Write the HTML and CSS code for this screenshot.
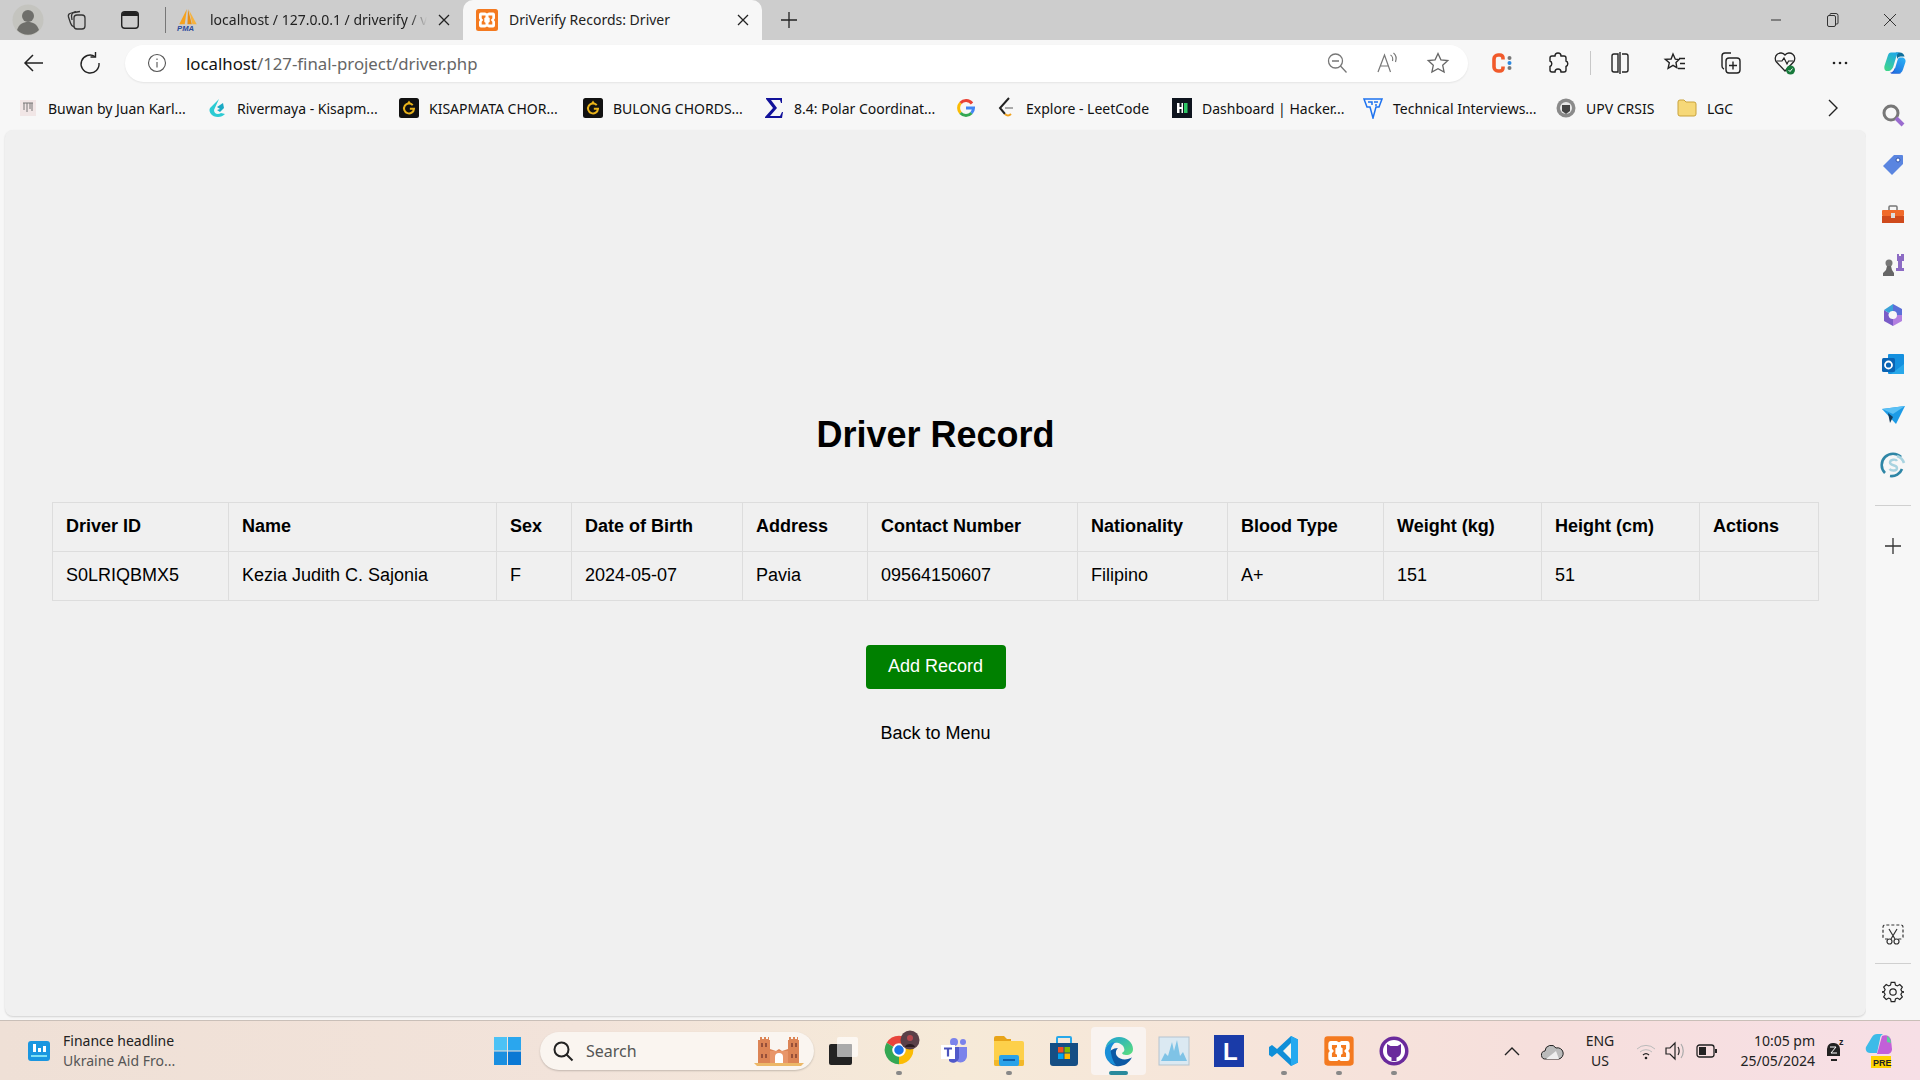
FILE: index.html
```html
<!DOCTYPE html>
<html lang="en">
  <head>
    <meta charset="UTF-8">
    <meta name="viewport" content="width=device-width, initial-scale=1.0">
    <title>DriVerify Records: Driver</title>
    <link rel="stylesheet" href="styles.css">
  </head>
  <body>
    <svg class="sprites" width="0" height="0">
      <defs>
        <linearGradient id="edge-top" x1="0" y1="0" x2="1" y2="1">
          <stop offset="0" stop-color="#1b9fd8"/>
          <stop offset="1" stop-color="#5ee07a"/>
        </linearGradient>
        <linearGradient id="copilot-left" x1="0.7" y1="0" x2="0.2" y2="1">
          <stop offset="0" stop-color="#1fa8e8"/>
          <stop offset="1" stop-color="#3fd68a"/>
        </linearGradient>
        <linearGradient id="copilot-right" x1="0.8" y1="0" x2="0.2" y2="1">
          <stop offset="0" stop-color="#2ab0f5"/>
          <stop offset="1" stop-color="#1f6fe0"/>
        </linearGradient>
      </defs>
      <symbol id="xampp" viewBox="0 0 24 24">
        <rect x="1" y="1" width="22" height="22" rx="2.500" fill="#f47a20"/>
        <path d="M6 4.500h4c1 0 1.500 1 2 1s1-1 2-1h4c1.500 0 2 1 2 2.500v3c0 1-1 1.500-1 2s1 1 1 2v3c0 1.500-.5 2.500-2 2.500h-4c-1 0-1.500-1-2-1s-1 1-2 1H6c-1.500 0-2-1-2-2.500v-3c0-1 1-1.500 1-2s-1-1-1-2V7c0-1.500.5-2.500 2-2.500z" fill="#fff"/>
        <path d="M10.500 7.500H6.700v2.800l1.500 1.700-1.500 1.700v2.800h3.800v-1.700L9.300 14v-4l1.200-.8zM13.500 7.500h3.800v2.800L15.800 12l1.500 1.700v2.800h-3.800v-1.700l1.200-.8v-4l-1.200-.8z" fill="#f47a20"/>
      </symbol>
      <symbol id="g-mark" viewBox="0 0 24 24">
        <rect width="24" height="24" rx="3" fill="#111"/>
        <path d="M16.500 8.500A6 6 0 1 0 18 13h-5" fill="none" stroke="#e8b21a" stroke-width="2.400"/>
        <path d="M12 3l-2 3h4z" fill="#e8b21a"/>
      </symbol>
      <symbol id="copilot" viewBox="0 0 30 30">
        <path d="M16 2h5c3 0 5 2 6 5h-5c-2 0-3 1-4 3z" fill="#0f6f9c"/>
        <path d="M10 2h11c-3 1-4 3-5 7l-3 10c-1 3-3 6-7 6H5c-3 0-4-4-3-7L6 6c1-3 2-4 4-4z" fill="url(#copilot-left)"/>
        <path d="M9 27c2 0 4-2 5-4l1-2c1 3 3 4 6 4l1 3H10z" fill="#2346c8"/>
        <path d="M21 8h3c3 0 5 3 4 6l-3 9c-1 3-3 5-6 5H10c3-1 4-3 5-6l3-10c.5-2 1.500-4 3-4z" fill="url(#copilot-right)"/>
      </symbol>
    </svg>

    <header class="tabstrip">
      <span class="slot">
        <svg width="32" height="32" viewBox="0 0 32 32"><circle cx="16" cy="16" r="15.500" fill="#c4c4bf"/><circle cx="16" cy="12" r="6" fill="#6f6f6b"/><path d="M5 26c2-6 6-8 11-8s9 2 11 8a15 15 0 0 1-22 0z" fill="#6f6f6b"/></svg>
      </span>
      <span class="slot">
        <svg width="24" height="24" viewBox="0 0 24 24" fill="none" stroke="#333" stroke-width="1.300"><rect x="9" y="7" width="11" height="14" rx="3"/><path d="M9 19c-2-1-3-2-3.500-4L3.500 9c-.5-2 0-3 1.500-3.500L11 3.500"/><path d="M7 12L6.500 8c0-2 1-3 2.500-3.500L15 3.500"/></svg>
      </span>
      <span class="slot">
        <svg width="22" height="22" viewBox="0 0 22 22"><rect x="2.700" y="2.700" width="16.600" height="16.600" rx="3" fill="none" stroke="#222" stroke-width="1.400"/><path d="M3 6a3 3 0 0 1 3-3h10a3 3 0 0 1 3 3v1H3z" fill="#222"/></svg>
      </span>
      <span class="slot"><i class="vsep"></i></span>
      <div class="tab">
        <svg class="favicon" width="24" height="24" viewBox="0 0 22 22"><path d="M10 1L3 15h5z" fill="#f6a21d"/><path d="M11 1l-.5 14h4z" fill="#e88e14"/><path d="M12 2l3 13h4z" fill="#f6b23d"/><text x="1" y="21" class="pma">PMA</text></svg>
        <span class="tab-title tab-fade">localhost / 127.0.0.1 / driverify / v</span>
        <svg class="close" width="14" height="14" viewBox="0 0 14 14"><path d="M2 2l10 10M12 2L2 12" stroke="#222" stroke-width="1.300"/></svg>
      </div>
      <div class="tab tab-active">
        <svg class="favicon" width="24" height="24"><use href="#xampp"/></svg>
        <span class="tab-title">DriVerify Records: Driver</span>
        <svg class="close" width="14" height="14" viewBox="0 0 14 14"><path d="M2 2l10 10M12 2L2 12" stroke="#222" stroke-width="1.300"/></svg>
      </div>
      <span class="slot">
        <svg width="20" height="20" viewBox="0 0 20 20"><path d="M10 2v16M2 10h16" stroke="#222" stroke-width="1.300"/></svg>
      </span>
      <span></span>
      <span class="slot"><svg width="12" height="12" viewBox="0 0 12 12"><path d="M1 6h10" stroke="#333"/></svg></span>
      <span class="slot"><svg width="14" height="16" viewBox="0 0 14 16" fill="none" stroke="#333"><rect x="1.500" y="3.500" width="8" height="11" rx="1.500"/><path d="M4 3V2.500a1 1 0 0 1 1-1h5a2 2 0 0 1 2 2V11a1 1 0 0 1-1 1h-1"/></svg></span>
      <span class="slot"><svg width="14" height="14" viewBox="0 0 14 14"><path d="M1 1l12 12M13 1L1 13" stroke="#333"/></svg></span>
    </header>

    <div class="toolbar">
      <span class="slot slot-back">
        <svg width="24" height="24" viewBox="0 0 24 24" fill="none" stroke="#222" stroke-width="1.500"><path d="M21 12H3.500M11 4l-8 8 8 8"/></svg>
      </span>
      <span class="slot slot-reload">
        <svg width="24" height="24" viewBox="0 0 24 24" fill="none" stroke="#222" stroke-width="1.400"><path d="M17 5.500A9 9 0 1 0 21 12"/><path d="M17.500 1v5h-5"/></svg>
      </span>
      <div class="addressbar">
        <svg width="20" height="20" viewBox="0 0 20 20" fill="none" stroke="#555" stroke-width="1.100"><circle cx="10" cy="10" r="8.500"/><path d="M10 9v5.500M10 5.500v1.500"/></svg>
        <span class="url"><span class="url-host">localhost</span>/127-final-project/driver.php</span>
        <span class="addr-tools">
          <svg width="22" height="22" viewBox="0 0 22 22" fill="none" stroke="#777" stroke-width="1.300"><circle cx="9.500" cy="9" r="7"/><path d="M14.500 14l6 6.500M6 9h7"/></svg>
          <svg width="24" height="22" viewBox="0 0 24 22" fill="none" stroke="#777" stroke-width="1.200"><path d="M3 20L9.500 3l6 17M5.500 14h8"/><path d="M15.500 3c2 1 2.500 4 2 6M18.500 1c2.500 2 3 6 2 9"/></svg>
          <svg width="24" height="24" viewBox="0 0 24 24" fill="none" stroke="#666" stroke-width="1.300"><path d="M12 2.500l2.900 6.300 6.900.8-5.100 4.700 1.400 6.800-6.100-3.400-6.100 3.400 1.400-6.800L2.200 9.600l6.900-.8z"/></svg>
        </span>
      </div>
      <div class="tools">
        <span class="tool">
          <svg width="24" height="22" viewBox="0 0 24 20"><path d="M12 6.500V5a3 3 0 0 0-3-3H7a4 4 0 0 0-4 4v8a4 4 0 0 0 4 4h2a3 3 0 0 0 3-3v-1.500" fill="none" stroke="#f15a2b" stroke-width="3.600"/><circle cx="18.500" cy="5" r="2" fill="#777"/><circle cx="18.500" cy="10" r="2" fill="#2b88e0"/><circle cx="18.500" cy="15" r="2" fill="#777"/></svg>
        </span>
        <span class="tool">
          <svg width="24" height="24" viewBox="0 0 24 24" fill="none" stroke="#222" stroke-width="1.400"><path d="M9 5a3 3 0 0 1 6 0h3a2 2 0 0 1 2 2v3a3 3 0 0 1 0 5.500V19a2 2 0 0 1-2 2h-3a3 3 0 0 0-6 0H6a2 2 0 0 1-2-2v-3.500a3 3 0 0 0 0-5.500V7a2 2 0 0 1 2-2z"/></svg>
        </span>
        <i class="vsep vsep-tools"></i>
        <span class="tool">
          <svg width="24" height="24" viewBox="0 0 24 24" fill="none" stroke="#222" stroke-width="1.400"><path d="M10 3H6a2 2 0 0 0-2 2v14a2 2 0 0 0 2 2h4zM14 3h4a2 2 0 0 1 2 2v14a2 2 0 0 1-2 2h-4M12 1v22"/></svg>
        </span>
        <span class="tool">
          <svg width="24" height="24" viewBox="0 0 24 24" fill="none" stroke="#222" stroke-width="1.400"><path d="M10 3l2.300 5.200 3.700.4-3 3 .8 5-3.800-2.300-4.900 3 1.200-5.500-4-3.400 5.800-.4zM16 7.500h6M17 12.500h5M15 17.500h7"/></svg>
        </span>
        <span class="tool">
          <svg width="24" height="24" viewBox="0 0 24 24" fill="none" stroke="#222" stroke-width="1.400"><path d="M13 2H7a3 3 0 0 0-3 3v10a3 3 0 0 0 2 3"/><rect x="8" y="7" width="14" height="15" rx="3"/><path d="M15 10.500v8M11 14.500h8"/></svg>
        </span>
        <span class="tool">
          <svg width="24" height="26" viewBox="0 0 24 26"><path d="M12 21L3.500 12a5.500 5.500 0 0 1 8.500-7 5.500 5.500 0 0 1 8.500 7z" fill="none" stroke="#222" stroke-width="1.300"/><path d="M4 11h5l2-3 3 6 1.500-3H20" fill="none" stroke="#222" stroke-width="1.200"/><circle cx="17.500" cy="20" r="4.500" fill="#187a3c"/><path d="M15.500 20l1.500 1.500 2.500-3" fill="none" stroke="#fff"/></svg>
        </span>
        <span class="tool">
          <svg width="16" height="4" viewBox="0 0 16 4" fill="#222"><circle cx="2" cy="2" r="1.300"/><circle cx="8" cy="2" r="1.300"/><circle cx="14" cy="2" r="1.300"/></svg>
        </span>
        <span class="tool">
          <svg width="30" height="30"><use href="#copilot"/></svg>
        </span>
      </div>
    </div>

    <div class="content">
      <div class="main-col">
        <nav class="bookmarks">
          <a class="bm">
            <svg width="18" height="18" viewBox="0 0 18 18"><rect x="1" y="1" width="16" height="16" fill="#f1e6e6"/><path d="M4 4h10M5 4v7M8 4v9M11 4v6M13 4v8" stroke="#777"/></svg>
            <span>Buwan by Juan Karl...</span>
          </a>
          <a class="bm">
            <svg width="20" height="22" viewBox="0 0 20 22"><path d="M12 2L3 11c-2 4 2 9 8 9 3 0 5-1 7-3l-4-1c-3 2-7 1-7-3z" fill="#2ccbd3"/><path d="M16 6l1 5-4 4-3-2 3-1-3-2z" fill="#1aa9c4"/></svg>
            <span>Rivermaya - Kisapm...</span>
          </a>
          <a class="bm">
            <svg width="20" height="20"><use href="#g-mark"/></svg>
            <span>KISAPMATA CHOR...</span>
          </a>
          <a class="bm">
            <svg width="20" height="20"><use href="#g-mark"/></svg>
            <span>BULONG CHORDS...</span>
          </a>
          <a class="bm">
            <svg width="20" height="22" viewBox="0 0 20 22"><path d="M2 1h16v5h-1l-1-3H7l6 8-7 8h10l2-4h1l-1 6H1v-1l8-9L2 2z" fill="#12129a"/></svg>
            <span>8.4: Polar Coordinat...</span>
          </a>
          <a class="bm">
            <svg width="20" height="20" viewBox="0 0 20 20" fill="none" stroke-width="3"><path d="M16 5.500A7.500 7.500 0 0 0 4.500 5" stroke="#ea4335"/><path d="M4.500 5a7.500 7.500 0 0 0 0 10" stroke="#fbbc05"/><path d="M4.500 15a7.500 7.500 0 0 0 11 0" stroke="#34a853"/><path d="M15.500 15c1.300-1.300 2-3 2-5H10" stroke="#4285f4"/></svg>
          </a>
          <a class="bm">
            <svg width="20" height="22" viewBox="0 0 20 22" fill="none"><path d="M13 1L4 11l5 6" stroke="#222" stroke-width="2"/><path d="M9 17c2 2 4 2 6 0" stroke="#f0a11d" stroke-width="2"/><path d="M9 11h8" stroke="#aaa" stroke-width="2"/></svg>
            <span>Explore - LeetCode</span>
          </a>
          <a class="bm">
            <svg width="20" height="20" viewBox="0 0 20 20"><rect width="20" height="20" fill="#0e141e"/><path d="M5 5h2.500v4h2V5H11v10H9.500v-4h-2v4H5z" fill="#fff"/><rect x="12" y="5" width="3.500" height="10" fill="#2ec866"/></svg>
            <span>Dashboard | Hacker...</span>
          </a>
          <a class="bm">
            <svg width="20" height="22" viewBox="0 0 20 22" fill="none" stroke="#1e73f0" stroke-width="1.500"><path d="M1 2h18l-3 8h-3l-3 11-3-11H4zM5 5h4v3M11 5h4M12 8h2"/></svg>
            <span>Technical Interviews...</span>
          </a>
          <a class="bm">
            <svg width="20" height="22" viewBox="0 0 20 22"><circle cx="10" cy="11" r="9.500" fill="#8a8a8a"/><circle cx="10" cy="11" r="6" fill="#e8e8e8"/><path d="M6 8h8v6l-4 3-4-3z" fill="#444"/></svg>
            <span>UPV CRSIS</span>
          </a>
          <a class="bm">
            <svg width="20" height="20" viewBox="0 0 20 20"><path d="M1 4a2 2 0 0 1 2-2h4l2 2h8a2 2 0 0 1 2 2v10a2 2 0 0 1-2 2H3a2 2 0 0 1-2-2z" fill="#f6d878" stroke="#c9a23a"/></svg>
            <span>LGC</span>
          </a>
          <span class="bm-more">
            <svg width="12" height="20" viewBox="0 0 12 20"><path d="M2 2l8 8-8 8" fill="none" stroke="#222" stroke-width="1.400"/></svg>
          </span>
        </nav>

        <main class="page">
          <h1>Driver Record</h1>
          <table>
            <thead>
              <tr>
                <th class="c-id">Driver ID</th>
                <th class="c-name">Name</th>
                <th class="c-sex">Sex</th>
                <th class="c-dob">Date of Birth</th>
                <th class="c-addr">Address</th>
                <th class="c-contact">Contact Number</th>
                <th class="c-nat">Nationality</th>
                <th class="c-blood">Blood Type</th>
                <th class="c-wt">Weight (kg)</th>
                <th class="c-ht">Height (cm)</th>
                <th>Actions</th>
              </tr>
            </thead>
            <tbody>
              <tr>
                <td>S0LRIQBMX5</td>
                <td>Kezia Judith C. Sajonia</td>
                <td>F</td>
                <td>2024-05-07</td>
                <td>Pavia</td>
                <td>09564150607</td>
                <td>Filipino</td>
                <td>A+</td>
                <td>151</td>
                <td>51</td>
                <td></td>
              </tr>
            </tbody>
          </table>
          <a class="btn-add" href="#">Add Record</a>
          <a class="back-link" href="#">Back to Menu</a>
        </main>
      </div>

      <aside class="sidebar">
        <span class="side-item">
          <svg width="24" height="24" viewBox="0 0 24 24" fill="none"><circle cx="10" cy="10" r="7" stroke="#777" stroke-width="3"/><path d="M15 15l7 7" stroke="#9a6ccf" stroke-width="4"/></svg>
        </span>
        <span class="side-item">
          <svg width="22" height="22" viewBox="0 0 22 22"><path d="M1 12L12 1h8a1 1 0 0 1 1 1v8L10 21z" fill="#5a85e0"/><circle cx="16" cy="6" r="2" fill="#fff" stroke="#2f55b0"/></svg>
        </span>
        <span class="side-item">
          <svg width="24" height="22" viewBox="0 0 24 22"><path d="M8 6V3a1 1 0 0 1 1-1h6a1 1 0 0 1 1 1v3" fill="none" stroke="#777" stroke-width="1.500"/><rect x="1" y="6" width="22" height="6" rx="1" fill="#f06a2a"/><rect x="1" y="12" width="22" height="7" fill="#cf4a1c"/><rect x="10" y="9" width="4" height="5" fill="#ddd"/></svg>
        </span>
        <span class="side-item">
          <svg width="24" height="24" viewBox="0 0 24 24"><path d="M16 1h2v2h2V1h3v7h-2v7h2v3h-8v-3h2V8h-1z" fill="#8c6bc4"/><circle cx="8" cy="10" r="3.500" fill="#777"/><path d="M6 13h4l1 4 2 3v3H2v-3l3-3z" fill="#666"/></svg>
        </span>
        <span class="side-item">
          <svg width="24" height="24" viewBox="0 0 24 24"><path d="M12 1l9 5v6h-5a4 4 0 0 0-4-4z" fill="#5b6fd8"/><path d="M21 12v6l-9 5v-7a4 4 0 0 0 4-4z" fill="#b27fe0"/><path d="M12 23l-9-5V7l5 3a4 4 0 0 0 4 6z" fill="#7a5cc8"/><path d="M3 7l9-6v7a4 4 0 0 0-4 2z" fill="#3ba2d8"/></svg>
        </span>
        <span class="side-item">
          <svg width="24" height="24" viewBox="0 0 24 24"><rect x="7" y="1" width="16" height="20" rx="1" fill="#1490df"/><path d="M23 11v10H10z" fill="#28a8ea"/><rect x="1" y="5" width="13" height="14" rx="1.500" fill="#0a64b4"/><circle cx="7.500" cy="12" r="3.500" fill="none" stroke="#fff" stroke-width="1.800"/></svg>
        </span>
        <span class="side-item">
          <svg width="24" height="20" viewBox="0 0 24 20"><path d="M1 4l23-3-9 18z" fill="#1c9be6"/><path d="M1 4l11 5 12-8z" fill="#5ac0f5"/><path d="M7 8l2 10 3-6z" fill="#123c5e"/></svg>
        </span>
        <span class="side-item">
          <svg width="26" height="26" viewBox="0 0 26 26" fill="none"><path d="M21 5A11 11 0 0 0 5 21" stroke="#2f86a6" stroke-width="2.600"/><path d="M22 17a11 11 0 0 1-12 7" stroke="#2f86a6" stroke-width="2.600"/><path d="M17 4a11 11 0 0 1 7 7" stroke="#a8d3e0" stroke-width="2.600"/><path d="M17 9c-1-2-7-2-7 1.500s7 2 7 5.500-6 3-7.500 1" stroke="#a8d3e0" stroke-width="2.400"/></svg>
        </span>
        <i class="side-rule"></i>
        <span class="side-item">
          <svg width="18" height="18" viewBox="0 0 18 18"><path d="M9 1v16M1 9h16" stroke="#333" stroke-width="1.300"/></svg>
        </span>
        <span class="side-spacer"></span>
        <span class="side-item">
          <svg width="22" height="22" viewBox="0 0 22 22" fill="none" stroke="#333" stroke-width="1.200"><path d="M6 15H3a2 2 0 0 1-2-2V3a2 2 0 0 1 2-2h16a2 2 0 0 1 2 2v10a2 2 0 0 1-2 2h-3" stroke-dasharray="3 2"/><path d="M7 5l6 10M15 5L9 15"/><circle cx="7.500" cy="17.500" r="2.500"/><circle cx="14.500" cy="17.500" r="2.500"/></svg>
        </span>
        <i class="side-rule side-rule-low"></i>
        <span class="side-item">
          <svg width="22" height="22" viewBox="0 0 24 24" fill="none" stroke="#222" stroke-width="1.300"><path d="M10 1.500h4l.7 3 2 .9 2.700-1.600 2.800 2.800-1.600 2.700.9 2 3 .7v0l-3 .7-.9 2 1.600 2.700-2.800 2.800-2.700-1.600-2 .9-.7 3h-4l-.7-3-2-.9-2.700 1.600-2.800-2.800 1.600-2.700-.9-2-3-.7v0l3-.7.9-2-1.600-2.700 2.800-2.800 2.700 1.600 2-.9z"/><circle cx="12" cy="12" r="3.500"/></svg>
        </span>
      </aside>
    </div>

    <footer class="taskbar">
      <div class="widget">
        <svg width="24" height="22" viewBox="0 0 24 22"><rect x="1" y="1" width="22" height="20" rx="3" fill="#1a96e0"/><path d="M6 4h3v8H6zM11 8h3v4h-3zM16 6h3v6h-3z" fill="#fff"/><rect x="4" y="15" width="16" height="2" fill="#7ee0f5"/></svg>
        <div class="widget-text">
          <span>Finance headline</span>
          <span class="widget-sub">Ukraine Aid Fro...</span>
        </div>
      </div>
      <span class="slot">
        <svg width="29" height="30" viewBox="0 0 29 30"><path d="M1 1h13v13.500H1z" fill="#4cc2f5"/><path d="M15 1h13v13.500H15z" fill="#2aa6ee"/><path d="M1 15.500h13V29H1z" fill="#1a8fe0"/><path d="M15 15.500h13V29H15z" fill="#0a78d4"/></svg>
      </span>
      <div class="search">
        <svg width="22" height="22" viewBox="0 0 22 22" fill="none" stroke="#222" stroke-width="2"><circle cx="9.500" cy="9.500" r="7"/><path d="M14.500 14.500l6 6"/></svg>
        <span class="search-label">Search</span>
        <svg class="search-art" width="50" height="30" viewBox="0 0 50 30"><path d="M4 27V4h2V1h2v2h2V1h2v2h2V1h1v3h1v9l6 2 3-2 3 2 6-2V4h1V1h2v2h2V1h2v2h2V1h1v3h1v23z" fill="#dc8455"/><path d="M16 15h18v12H16z" fill="#e8966a"/><path d="M7 7h2v4H7zM11 7h2v4h-2zM37 7h2v4h-2zM41 7h2v4h-2zM7 18h2v4H7zM11 18h2v4h-2zM37 18h2v4h-2zM41 18h2v4h-2z" fill="#96503a"/><path d="M21 27v-6a4 4 0 0 1 8 0v6z" fill="#fff"/><path d="M0 27h50l-3 3H3z" fill="#ecb868"/></svg>
      </div>
      <div class="apps">
        <span class="app">
          <svg width="30" height="28" viewBox="0 0 30 28"><rect y="7" width="23" height="21" rx="2" fill="#222"/><rect x="8" width="21" height="20" rx="2" fill="#fff" opacity=".65"/><rect x="8" y="7" width="15" height="13" rx="1" fill="#aaa"/></svg>
        </span>
        <span class="app app-open">
          <svg class="chrome" width="36" height="36" viewBox="-3 3 36 36" fill="none" stroke-width="7.500"><path d="M5.910 14.750A10.500 10.500 0 0 1 24.090 14.750" stroke="#e8453c"/><path d="M24.090 14.750A10.500 10.500 0 0 1 15 30.500" stroke="#fbbc05"/><path d="M15 30.500A10.500 10.500 0 0 1 5.910 14.750" stroke="#34a853"/><circle cx="15" cy="20" r="5.500" fill="#1a73e8" stroke="#fff" stroke-width="1.500"/><circle cx="26" cy="10" r="9.500" fill="#5a4048" stroke="none"/><circle cx="26" cy="8" r="3" fill="#b5484f" stroke="none"/><path d="M21 17c1-4 9-4 10 0z" fill="#2a1a20" stroke="none"/></svg>
        </span>
        <span class="app">
          <svg width="28" height="30" viewBox="0 0 28 30"><circle cx="23" cy="6" r="3" fill="#7b83eb"/><path d="M14 11h13v9a6 6 0 0 1-13 0z" fill="#7b83eb"/><circle cx="14" cy="6" r="4" fill="#7b83eb"/><path d="M9 11h10v11a6 6 0 0 1-10 3z" fill="#5059c9"/><rect x="1" y="9" width="14" height="14" fill="#fff"/><path d="M4 12.500h8M8 12.500v8" stroke="#4b53bc" stroke-width="2.200"/></svg>
        </span>
        <span class="app app-open">
          <svg width="30" height="30" viewBox="0 0 30 30"><path d="M0 2a2 2 0 0 1 2-2h8l3 3h4v6H0z" fill="#e8a418"/><path d="M0 5h28a2 2 0 0 1 2 2v21a2 2 0 0 1-2 2H2a2 2 0 0 1-2-2z" fill="#fdd04a"/><path d="M0 24h30v4a2 2 0 0 1-2 2H2a2 2 0 0 1-2-2z" fill="#f2b82a"/><rect x="5" y="19" width="20" height="11" rx="2" fill="#2aa2e8"/><rect x="9" y="23" width="12" height="2" fill="#0d5fa8"/></svg>
        </span>
        <span class="app">
          <svg width="30" height="30" viewBox="0 0 30 30"><path d="M8 8V2a1 1 0 0 1 1-1h12a1 1 0 0 1 1 1v6" fill="none" stroke="#28a8ea" stroke-width="2"/><path d="M1 7h28v20a3 3 0 0 1-3 3H4a3 3 0 0 1-3-3z" fill="#154e84"/><rect x="9" y="11" width="5.500" height="5.500" fill="#f25022"/><rect x="15.500" y="11" width="5.500" height="5.500" fill="#7fba00"/><rect x="9" y="17.500" width="5.500" height="5.500" fill="#00a4ef"/><rect x="15.500" y="17.500" width="5.500" height="5.500" fill="#ffb900"/></svg>
        </span>
        <span class="app app-active">
          <svg width="32" height="32" viewBox="0 0 32 32"><path d="M2 15C3 7 9 2 16 2c8 0 14 6 14 12 0 4-3 6-7 6-2 0-4-1-4-2 2-1 3-3 2-5-1-4-6-6-11-5-4 1-7 3-8 7z" fill="url(#edge-top)"/><path d="M29 22c-1 1-2 1.500-4 2-4 1-9 0-11-3-2-3-1-6 1-8-5 0-9 3-10 7-1 5 2 10 8 11 6 1 13-2 16-9z" fill="#0c59a4"/><path d="M13 30C6 29 1 23 2 15c1-5 6-8 11-8-3 2-6 6-5 11 1 6 3 10 5 12z" fill="#1a8fd8"/></svg>
        </span>
        <span class="app">
          <svg width="32" height="30" viewBox="0 0 32 30"><rect x="1" y="1" width="30" height="28" fill="#dbe9f2" stroke="#b5c4cf"/><path d="M3 25l4-8 3 3 4-14 2 9 3-11 3 16 3-4 4 9z" fill="#7fc3e6"/></svg>
        </span>
        <span class="app">
          <svg width="30" height="32" viewBox="0 0 30 32"><rect width="30" height="32" fill="#1a3ba8"/><text x="9" y="25" class="logo-l">L</text></svg>
        </span>
        <span class="app app-open">
          <svg width="30" height="32" viewBox="0 0 30 32"><path d="M22 1l7 3.500v23L22 31 8 18l-5 4-3-2v-8l3-2 5 4z" fill="#0f8fd8"/><path d="M22 8l-8 8 8 8z" fill="#f5f5ee"/><path d="M22 1l7 3.500v23L22 31z" fill="#25a9f0"/></svg>
        </span>
        <span class="app app-open">
          <svg width="32" height="32"><use href="#xampp"/></svg>
        </span>
        <span class="app app-open">
          <svg width="30" height="30" viewBox="0 0 30 30"><circle cx="15" cy="15" r="14.500" fill="#6a2a9c"/><circle cx="15" cy="15" r="11" fill="#fff"/><path d="M8 8l3.500 2h7L22 8v8a6 6 0 0 1-4.500 5.500V25h-5v-3.500A6 6 0 0 1 8 16z" fill="#6a2a9c"/></svg>
        </span>
      </div>
      <div class="tray">
        <span class="slot"><svg width="16" height="10" viewBox="0 0 16 10"><path d="M1 9l7-7 7 7" fill="none" stroke="#222" stroke-width="1.400"/></svg></span>
        <span class="slot"><svg width="24" height="20" viewBox="0 0 24 20"><path d="M6 18a4 4 0 0 1-1-8 6 6 0 0 1 11-3 5 5 0 0 1 3 11z" fill="#bbb" stroke="#222"/><path d="M6 18l10-8 3 8z" fill="#eee"/></svg></span>
        <span class="lang"><span>ENG</span><span>US</span></span>
        <span class="slot"><svg width="20" height="20" viewBox="0 0 20 20" fill="none" stroke="#bbb"><path d="M1 8a13 13 0 0 1 18 0M4 11a9 9 0 0 1 12 0"/><path d="M7 14a4.500 4.500 0 0 1 6 0" stroke="#222" stroke-width="1.300"/><circle cx="10" cy="17" r="1.300" fill="#222" stroke="none"/></svg></span>
        <span class="slot"><svg width="22" height="22" viewBox="0 0 22 22" fill="none" stroke="#222" stroke-width="1.200"><path d="M2 8h4l5-5v16l-5-5H2zM14 7c1.500 2 1.500 6 0 8"/><path d="M17 4c3 4 3 10 0 14" stroke="#aaa"/></svg></span>
        <span class="slot"><svg width="22" height="14" viewBox="0 0 22 14"><rect x="1" y="1" width="17" height="12" rx="2.500" fill="none" stroke="#222" stroke-width="1.300"/><rect x="3" y="3" width="7" height="8" fill="#222"/><rect x="19" y="5" width="2" height="4" fill="#222"/></svg></span>
        <span class="clock"><span>10:05 pm</span><span>25/05/2024</span></span>
        <span class="slot"><svg width="24" height="26" viewBox="0 0 24 26"><path d="M11 5a6 6 0 0 1 6 6v7H4v-7a6 6 0 0 1 7-6z" fill="#222"/><path d="M8 22h6" stroke="#222" stroke-width="2"/><path d="M7 9h6l-5 6h6" fill="none" stroke="#fff"/><text x="16" y="7" class="zz">z</text></svg></span>
        <span class="slot">
          <svg width="32" height="36" viewBox="0 0 32 36"><path d="M10 4c1-2 3-3 5-3h6c-2 1-3 3-3 5l-3 14H8c-3 0-5-3-4-6z" fill="#3dbbe8"/><path d="M20 3c4-2 8 0 9 4l1 9c0 3-2 5-5 5H15z" fill="#c260d8"/><path d="M25 3c2 1 4 3 4 7l-4-1z" fill="#5ad29a"/><rect x="9" y="23" width="20" height="12" fill="#ffd400"/><text x="11" y="33" class="pre">PRE</text></svg>
        </span>
      </div>
    </footer>
  </body>
</html>
```

FILE: styles.css
```css
* {
    box-sizing: border-box;
}
html, body {
    height: 100%;
}
body {
    margin: 0;
    height: 1080px;
    overflow: hidden;
    display: flex;
    flex-direction: column;
    background-color: #f7f7f7;
    font-family: "Liberation Sans", Arial, sans-serif;
    color: #000;
}
.sprites {
    position: absolute;
}
.slot {
    display: flex;
    justify-content: center;
    align-items: center;
}
.vsep {
    display: block;
    width: 1px;
    height: 26px;
    background-color: #777;
}

/* browser chrome */
.tabstrip {
    flex: none;
    height: 40px;
    display: grid;
    grid-template-columns: 56px 42px 64px 6px 295px 299px 54px 1fr 52px 62px 52px;
    padding-right: 4px;
    background-color: #cdcdcd;
    font-family: "Noto Sans", sans-serif;
    font-size: 14px;
    color: #222;
}
.tab {
    display: flex;
    align-items: center;
    padding: 0 12px 0 8px;
    gap: 10px;
    min-width: 0;
}
.tab-active {
    padding-left: 12px;
    padding-right: 12px;
    border-radius: 10px 10px 0 0;
    background-color: #f7f7f7;
}
.tab-title {
    flex: 1;
    min-width: 0;
    padding-bottom: 2px;
    overflow: hidden;
    white-space: nowrap;
}
.tab-fade {
    -webkit-mask-image: linear-gradient(90deg, #000 92%, transparent);
    mask-image: linear-gradient(90deg, #000 92%, transparent);
}
.pma {
    font: italic bold 7px "Liberation Sans", sans-serif;
    fill: #2a4a9c;
}
.toolbar {
    flex: none;
    height: 46px;
    display: flex;
    align-items: center;
    background-color: #f7f7f7;
}
.slot-back {
    width: 68px;
}
.slot-reload {
    width: 44px;
}
.addressbar {
    width: 1343px;
    height: 37px;
    margin-left: 13px;
    padding: 0 18px 0 22px;
    display: flex;
    align-items: center;
    gap: 19px;
    border-radius: 19px;
    background-color: #fff;
    box-shadow: 0 1px 2px rgba(0, 0, 0, 0.08);
    font-family: "Noto Sans", sans-serif;
    font-size: 16.8px;
    color: #666;
}
.url-host {
    color: #111;
}
.addr-tools {
    margin-left: auto;
    display: flex;
    align-items: center;
    gap: 27px;
}
.tools {
    display: flex;
    align-items: center;
    gap: 31px;
    margin-left: 23px;
}
.tool {
    width: 24px;
    display: flex;
    justify-content: center;
    align-items: center;
}
.vsep-tools {
    height: 24px;
    margin: 0 -14px 0 -11px;
    background-color: #c8c8c8;
}

.content {
    flex: 1;
    min-height: 0;
    display: flex;
}
.main-col {
    flex: 1;
    min-width: 0;
    display: flex;
    flex-direction: column;
}
.bookmarks {
    flex: none;
    height: 44px;
    padding: 0 21px 0 18px;
    display: grid;
    grid-template-columns: 189px 192px 184px 181px 192px 40px 176px 191px 193px 121px 1fr auto;
    align-items: center;
    font-family: "Noto Sans", sans-serif;
    font-size: 14px;
    color: #111;
}
.bm {
    display: flex;
    align-items: center;
    gap: 10px;
    white-space: nowrap;
}
.bm svg {
    flex: none;
    width: 20px;
}
.bm-more {
    display: flex;
    padding-right: 6px;
}

/* page */
.page {
    flex: 1;
    min-height: 0;
    margin: 0 0 4px 5px;
    padding: 10px 47px 0;
    display: flex;
    flex-direction: column;
    align-items: center;
    justify-content: center;
    border-radius: 8px;
    background-color: #f0f0f0;
    box-shadow: 0 1px 2px rgba(0, 0, 0, 0.15);
}
h1 {
    margin: 0 0 47px;
    font-size: 36px;
    line-height: 41px;
    font-weight: bold;
}
table {
    width: 100%;
    border-collapse: collapse;
    font-size: 18px;
}
th, td {
    height: 49px;
    padding: 0 13px;
    border: 1px solid #ddd;
    text-align: left;
}
.c-id { width: 176px; }
.c-name { width: 268px; }
.c-sex { width: 75px; }
.c-dob { width: 171px; }
.c-addr { width: 125px; }
.c-contact { width: 210px; }
.c-nat { width: 150px; }
.c-blood { width: 156px; }
.c-wt { width: 158px; }
.c-ht { width: 158px; }
.btn-add {
    margin-top: 44px;
    width: 140px;
    height: 44px;
    display: flex;
    justify-content: center;
    align-items: center;
    border-radius: 4px;
    background-color: #008000;
    color: #fff;
    font-size: 18px;
    text-decoration: none;
}
.back-link {
    margin-top: 34px;
    line-height: 20px;
    font-size: 18px;
    color: #000;
    text-decoration: none;
}

/* edge sidebar */
.sidebar {
    flex: none;
    width: 54px;
    display: flex;
    flex-direction: column;
    align-items: center;
    padding: 4px 0 3px;
    background-color: #f7f7f7;
}
.side-item {
    flex: none;
    height: 50px;
    width: 100%;
    display: flex;
    justify-content: center;
    align-items: center;
}
.side-rule {
    flex: none;
    width: 36px;
    height: 1px;
    margin: 15px 0;
    background-color: #d0d0d0;
}
.side-rule-low {
    margin: 3px 0;
}
.side-spacer {
    flex: 1;
}

/* windows taskbar */
.taskbar {
    flex: none;
    height: 60px;
    display: grid;
    grid-template-columns: 490px 34px 290px 605px 1fr;
    align-items: center;
    border-top: 1px solid #c9bfb8;
    background: linear-gradient(90deg, #efe0d6 0%, #f2e3da 30%, #f6ead8 50%, #f6dfdc 80%, #f7dfe6 100%);
    font-family: "Noto Sans", sans-serif;
    color: #222;
}
.widget {
    display: flex;
    align-items: center;
    gap: 12px;
    padding-left: 27px;
    font-size: 14px;
}
.widget-text {
    display: flex;
    flex-direction: column;
    gap: 1px;
    padding-bottom: 1px;
}
.widget-sub {
    color: #555;
}
.search {
    height: 38px;
    margin-left: 16px;
    padding: 0 10px 0 12px;
    display: flex;
    align-items: center;
    gap: 12px;
    border-radius: 19px;
    background-color: #faf5f0;
    box-shadow: 0 1px 2px rgba(0, 0, 0, 0.2);
    font-size: 16px;
    color: #555;
}
.search-art {
    margin-left: auto;
}
.apps {
    display: flex;
    padding-left: 2px;
}
.app {
    position: relative;
    flex: none;
    width: 55px;
    height: 48px;
    display: flex;
    justify-content: center;
    align-items: center;
}
.chrome {
    overflow: visible;
}
.app-open::after {
    content: "";
    position: absolute;
    left: 25px;
    bottom: 0;
    width: 6px;
    height: 4px;
    border-radius: 2px;
    background-color: #888;
}
.app-active {
    border-radius: 4px;
    background-color: #f9f3f0;
}
.app-active::after {
    content: "";
    position: absolute;
    left: 18px;
    bottom: 0;
    width: 19px;
    height: 4px;
    border-radius: 2px;
    background-color: #2a8a9c;
}
.logo-l {
    font: bold 24px "Liberation Sans", sans-serif;
    fill: #fff;
}
.tray {
    display: grid;
    grid-template-columns: 40px 40px 56px 36px 22px 42px 87px 39px 47px;
    justify-content: start;
    align-items: center;
    margin-left: 73px;
    font-size: 14px;
}
.lang, .clock {
    display: flex;
    flex-direction: column;
    gap: 1px;
    align-items: center;
    padding-bottom: 1px;
}
.clock {
    align-items: flex-end;
}
.zz {
    font: bold 9px "Liberation Sans", sans-serif;
    fill: #222;
}
.pre {
    font: bold 9px "Liberation Sans", sans-serif;
    fill: #222;
}
```
